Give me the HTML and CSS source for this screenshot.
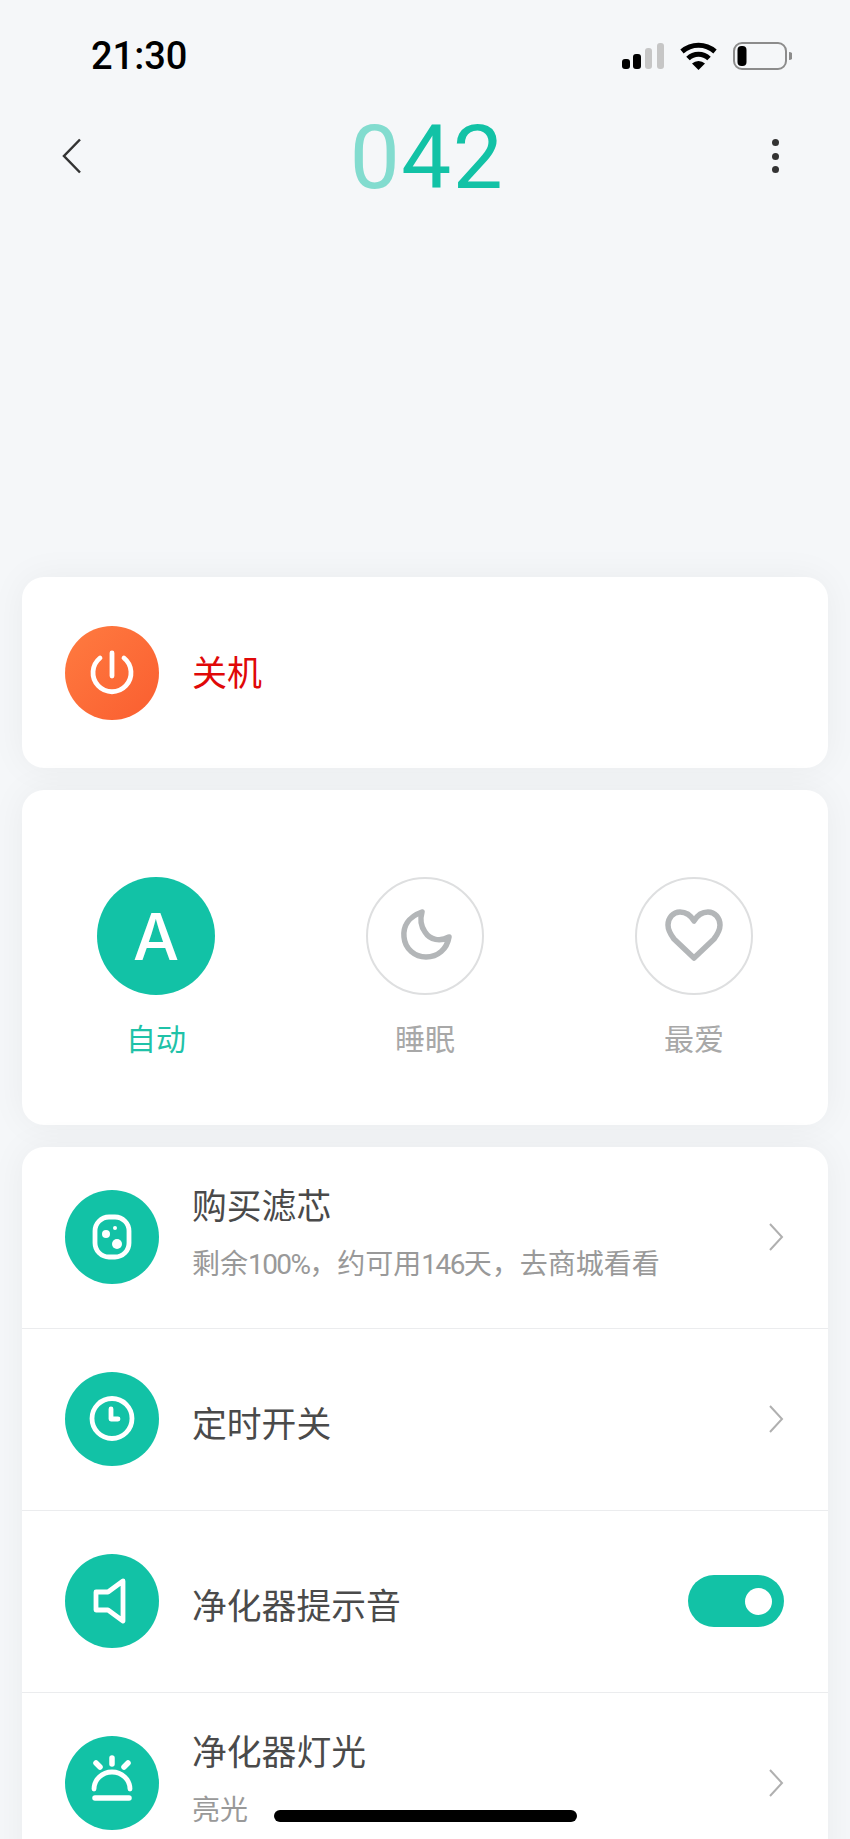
FILE: index.html
```html
<!DOCTYPE html>
<html lang="zh-CN">
<head>
  <meta charset="UTF-8">
  <meta name="viewport" content="width=device-width, initial-scale=1.0">
  <title>042</title>
  <link rel="stylesheet" href="styles.css">
</head>
<body>
  <div class="page">

    <div class="status-bar">
      <span class="status-time">21:30</span>
      <svg class="status-icons" width="170" height="28" viewBox="0 0 170 28">
        <rect x="0" y="17" width="8" height="10" rx="3" fill="#000"/>
        <rect x="11" y="12" width="8" height="15" rx="3" fill="#000"/>
        <rect x="23" y="6" width="7" height="21" rx="3" fill="#c6c6c6"/>
        <rect x="35" y="1" width="7" height="26" rx="3" fill="#c6c6c6"/>
        <path d="M60 9.500A25 25 0 0 1 93 9.500" fill="none" stroke="#000" stroke-width="5"/>
        <path d="M66 16.500A15 15 0 0 1 87 16.500" fill="none" stroke="#000" stroke-width="5"/>
        <path d="M76.500 28L70 21.500A9.500 9.500 0 0 1 83 21.500Z" fill="#000"/>
        <rect x="112" y="1" width="52" height="26" rx="8" fill="none" stroke="#8c8c8c" stroke-width="2"/>
        <rect x="115.500" y="4" width="9" height="20" rx="4" fill="#000"/>
        <path d="M167 10A4 4 0 0 1 167 18Z" fill="#8c8c8c"/>
      </svg>
    </div>

    <div class="top-bar">
      <svg class="back" width="20" height="36" viewBox="0 0 20 36">
        <path d="M18 1.500L2 18L18 34.500" fill="none" stroke="#333" stroke-width="2.500"/>
      </svg>
      <h1 class="title"><span class="title-dim">0</span>42</h1>
      <div class="more">
        <span></span>
        <span></span>
        <span></span>
      </div>
    </div>

    <section class="card power-card">
      <div class="icon-circle icon-orange">
        <svg width="94" height="94" viewBox="0 0 94 94">
          <path d="M35 32A19 19 0 1 0 59 32" class="icon-line"/>
          <path d="M47 27V50" class="icon-line"/>
        </svg>
      </div>
      <span class="power-label">关机</span>
    </section>

    <section class="card mode-card">
      <div class="mode">
        <div class="mode-circle mode-active">A</div>
        <div class="mode-label mode-label-active">自动</div>
      </div>
      <div class="mode">
        <div class="mode-circle">
          <svg width="60" height="60" viewBox="0 0 60 60">
            <path d="M27 6C13 11 8 21 9 31C10 43 20 51 31 51C43 51 52 43 54 31C45 36 35 34 30 26C25 19 25 13 27 6Z" class="mode-icon"/>
          </svg>
        </div>
        <div class="mode-label">睡眠</div>
      </div>
      <div class="mode">
        <div class="mode-circle">
          <svg width="60" height="60" viewBox="0 0 60 60">
            <path d="M30 15C26 8 20 6 16 6C9 6 4 12 4 19C4 25 7 29 10 33L30 52L50 33C53 29 56 25 56 19C56 12 51 6 44 6C40 6 34 8 30 15Z" class="mode-icon"/>
          </svg>
        </div>
        <div class="mode-label">最爱</div>
      </div>
    </section>

    <section class="card list-card">
      <div class="row">
        <div class="icon-circle">
          <svg width="94" height="94" viewBox="0 0 94 94">
            <rect x="30" y="27" width="34" height="40" rx="14" class="icon-line"/>
            <circle cx="41" cy="44" r="4" fill="#fff"/>
            <circle cx="52" cy="54" r="5" fill="#fff"/>
            <circle cx="50" cy="38" r="2" fill="#fff"/>
          </svg>
        </div>
        <div class="row-text">
          <div class="row-title">购买滤芯</div>
          <div class="row-sub">剩余<span class="row-num">100%</span>，约可用<span class="row-num">146</span>天，去商城看看</div>
        </div>
        <svg class="chevron" width="16" height="28" viewBox="0 0 16 28">
          <path d="M2 1L14 14L2 27" fill="none" stroke="#b0b0b0" stroke-width="2"/>
        </svg>
      </div>

      <div class="row">
        <div class="icon-circle">
          <svg width="94" height="94" viewBox="0 0 94 94">
            <circle cx="47" cy="46.500" r="20" class="icon-line"/>
            <path d="M46 37V47H53" class="icon-line"/>
          </svg>
        </div>
        <div class="row-text row-text-single">
          <div class="row-title">定时开关</div>
        </div>
        <svg class="chevron" width="16" height="28" viewBox="0 0 16 28">
          <path d="M2 1L14 14L2 27" fill="none" stroke="#b0b0b0" stroke-width="2"/>
        </svg>
      </div>

      <div class="row">
        <div class="icon-circle">
          <svg width="94" height="94" viewBox="0 0 94 94">
            <path d="M58 27L43 38H31V56H43L58 67Z" class="icon-line"/>
          </svg>
        </div>
        <div class="row-text row-text-single">
          <div class="row-title">净化器提示音</div>
        </div>
        <div class="toggle"><span class="toggle-knob"></span></div>
      </div>

      <div class="row">
        <div class="icon-circle">
          <svg width="94" height="94" viewBox="0 0 94 94">
            <path d="M29 53A18 17 0 0 1 65 53" class="icon-line"/>
            <path d="M30 62H64" class="icon-line icon-thick"/>
            <path d="M47 22V28" class="icon-line icon-thick"/>
            <path d="M31 27L35 31" class="icon-line icon-thick"/>
            <path d="M63 27L59 31" class="icon-line icon-thick"/>
          </svg>
        </div>
        <div class="row-text">
          <div class="row-title">净化器灯光</div>
          <div class="row-sub">亮光</div>
        </div>
        <svg class="chevron" width="16" height="28" viewBox="0 0 16 28">
          <path d="M2 1L14 14L2 27" fill="none" stroke="#b0b0b0" stroke-width="2"/>
        </svg>
      </div>
    </section>

    <div class="home-indicator"></div>
  </div>
</body>
</html>
```

FILE: styles.css
```css
* {
  box-sizing: border-box;
}
html, body {
  margin: 0;
  padding: 0;
}
body {
  font-family: Roboto, "Noto Sans CJK SC", sans-serif;
  background-color: #f5f7f9;
}
.page {
  position: relative;
  width: 850px;
  height: 1839px;
  overflow: hidden;
  background-color: #f5f7f9;
}

/* status bar */
.status-bar {
  display: flex;
  justify-content: space-between;
  align-items: center;
  height: 95px;
  padding: 17px 58px 0 91px;
}
.status-time {
  font-size: 38px;
  font-weight: 500;
  color: #000;
}

/* top bar */
.top-bar {
  display: flex;
  justify-content: space-between;
  align-items: center;
  height: 120px;
  padding: 2px 71px 0 62px;
}
.title {
  margin: 0;
  padding-top: 4px;
  font-size: 89px;
  font-weight: 400;
  letter-spacing: 1.500px;
  line-height: 120px;
  color: #12c2a6;
}
.title-dim {
  opacity: 0.5;
}
.more {
  display: flex;
  flex-direction: column;
  gap: 6.500px;
}
.more span {
  display: block;
  width: 7px;
  height: 7px;
  border-radius: 50%;
  background-color: #333;
}

/* cards */
.card {
  margin: 0 22px 22px;
  background-color: #fff;
  border-radius: 22px;
  box-shadow: 0 0 36px rgba(0, 0, 0, 0.05);
}
.power-card {
  display: flex;
  align-items: center;
  gap: 33px;
  height: 191px;
  margin-top: 362px;
  padding: 0 43px;
}
.power-label {
  padding-bottom: 5px;
  font-size: 35px;
  font-weight: 400;
  color: #e00808;
}
.icon-circle {
  flex: none;
  width: 94px;
  height: 94px;
  border-radius: 50%;
  background-color: #12c2a6;
}
.icon-orange {
  background: linear-gradient(135deg, #ff7b40, #fa5e30);
}
.icon-circle svg {
  display: block;
}
.icon-line {
  fill: none;
  stroke: #fff;
  stroke-width: 4.800;
  stroke-linecap: round;
  stroke-linejoin: round;
}
.icon-thick {
  stroke-width: 5.500;
}

/* modes */
.mode-card {
  display: grid;
  grid-template-columns: repeat(3, 269px);
  justify-content: center;
  height: 335px;
  padding-top: 87px;
}
.mode {
  display: flex;
  flex-direction: column;
  align-items: center;
}
.mode-circle {
  display: flex;
  justify-content: center;
  align-items: center;
  width: 118px;
  height: 118px;
  border: 2px solid #dedfe0;
  border-radius: 50%;
}
.mode-active {
  border: none;
  background-color: #12c2a6;
  font-family: Inter, sans-serif;
  font-size: 65px;
  font-weight: 500;
  color: #fff;
}
.mode-icon {
  fill: none;
  stroke: #b3b6b8;
  stroke-width: 5.500;
  stroke-linejoin: round;
}
.mode-label {
  margin-top: 25px;
  font-size: 30px;
  font-weight: 400;
  line-height: 40px;
  color: #a8a8a8;
}
.mode-label-active {
  color: #1fc2a8;
}

/* list */
.list-card {
  margin-bottom: 0;
}
.row {
  display: flex;
  align-items: center;
  height: 182px;
  padding: 0 45px 1px 43px;
  border-bottom: 1px solid #ebecee;
}
.row-text {
  flex: 1;
  margin-left: 33px;
  padding-bottom: 8px;
}
.row-text-single {
  padding-bottom: 0;
  padding-top: 11px;
}
.row-title {
  font-size: 34.800px;
  font-weight: 400;
  line-height: 50px;
  color: #4a4a4a;
}
.row-sub {
  margin-top: 13px;
  font-size: 28px;
  font-weight: 400;
  line-height: 40px;
  color: #999;
}
.row-num {
  letter-spacing: -1.600px;
}
.chevron {
  flex: none;
  margin-right: -1px;
}
.toggle {
  display: flex;
  justify-content: flex-end;
  align-items: center;
  flex: none;
  width: 96px;
  height: 52px;
  margin-right: -1px;
  padding-right: 12px;
  border-radius: 26px;
  background-color: #12c2a6;
}
.toggle-knob {
  width: 27px;
  height: 27px;
  border-radius: 50%;
  background-color: #fff;
}

.home-indicator {
  position: absolute;
  left: 274px;
  top: 1810px;
  width: 303px;
  height: 12px;
  border-radius: 6px;
  background-color: #000;
}
```
